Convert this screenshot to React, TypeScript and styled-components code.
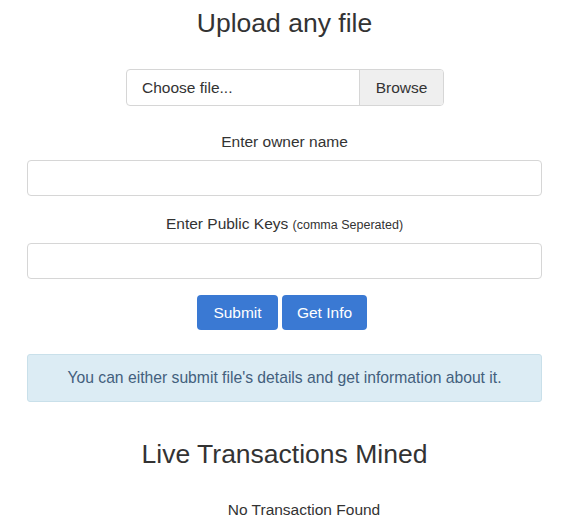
import React from 'react';
import styled, { createGlobalStyle } from 'styled-components';

const GlobalStyle = createGlobalStyle`
  body {
    margin: 0;
    background: #ffffff;
    font-family: "Liberation Sans", Arial, sans-serif;
    color: #333333;
  }
`;

const Page = styled.div`
  padding: 0 24px 0 27px;
  display: flex;
  flex-direction: column;
  align-items: stretch;
`;

const Title = styled.h2`
  margin: 6px 0 0;
  font-size: 26.5px;
  font-weight: 400;
  line-height: 34px;
  text-align: center;
  color: #333333;
`;

const FileGroup = styled.div`
  align-self: center;
  margin: 29px 0 0 1px;
  width: 318px;
  height: 37px;
  box-sizing: border-box;
  display: flex;
  border: 1px solid #d6d6d6;
  border-radius: 4px;
  overflow: hidden;
  font-size: 15.5px;
`;

const FileLabel = styled.div`
  flex: 1;
  display: flex;
  align-items: center;
  padding-left: 15px;
  color: #333333;
`;

const BrowseButton = styled.div`
  width: 83px;
  display: flex;
  align-items: center;
  justify-content: center;
  background: #efefef;
  border-left: 1px solid #d6d6d6;
  color: #333333;
`;

const Label = styled.label<{ $top: number }>`
  display: block;
  margin-top: ${(p) => p.$top}px;
  font-size: 15.5px;
  line-height: 20px;
  text-align: center;
  color: #333333;
`;

const Small = styled.small`
  font-size: 12.5px;
`;

const TextInput = styled.input`
  display: block;
  box-sizing: border-box;
  width: 100%;
  height: 36px;
  margin: 8px 0 0;
  border: 1px solid #d6d6d6;
  border-radius: 4px;
  background: #ffffff;
  font: inherit;
`;

const ButtonRow = styled.div`
  display: flex;
  justify-content: center;
  gap: 4px;
  margin-top: 16px;
  padding-right: 5px;
`;

const Button = styled.button<{ $width: number }>`
  width: ${(p) => p.$width}px;
  height: 35px;
  border: none;
  border-radius: 4px;
  background: #3a79d3;
  color: #ffffff;
  font-family: inherit;
  font-size: 15.5px;
  padding: 0;
`;

const Alert = styled.div`
  margin-top: 24px;
  height: 48px;
  box-sizing: border-box;
  display: flex;
  align-items: center;
  justify-content: center;
  background: #dcecf4;
  border: 1px solid #c9e0ea;
  border-radius: 3px;
  color: #43607d;
  font-size: 15.7px;
`;

const SubTitle = styled.h2`
  margin: 35px 0 0;
  font-size: 26.5px;
  font-weight: 400;
  line-height: 34px;
  text-align: center;
  color: #333333;
`;

const Empty = styled.p`
  margin: 29px 0 0;
  padding-left: 39px;
  font-size: 15.5px;
  line-height: 20px;
  text-align: center;
  color: #333333;
`;

export default function App() {
  return (
    <>
      <GlobalStyle />
      <Page>
        <Title>Upload any file</Title>
        <FileGroup>
          <FileLabel>Choose file...</FileLabel>
          <BrowseButton>Browse</BrowseButton>
        </FileGroup>

        <Label $top={26}>Enter owner name</Label>
        <TextInput type="text" />

        <Label $top={18}>
          Enter Public Keys <Small>(comma Seperated)</Small>
        </Label>
        <TextInput type="text" />

        <ButtonRow>
          <Button $width={81}>Submit</Button>
          <Button $width={85}>Get Info</Button>
        </ButtonRow>

        <Alert>You can either submit file's details and get information about it.</Alert>

        <SubTitle>Live Transactions Mined</SubTitle>
        <Empty>No Transaction Found</Empty>
      </Page>
    </>
  );
}
